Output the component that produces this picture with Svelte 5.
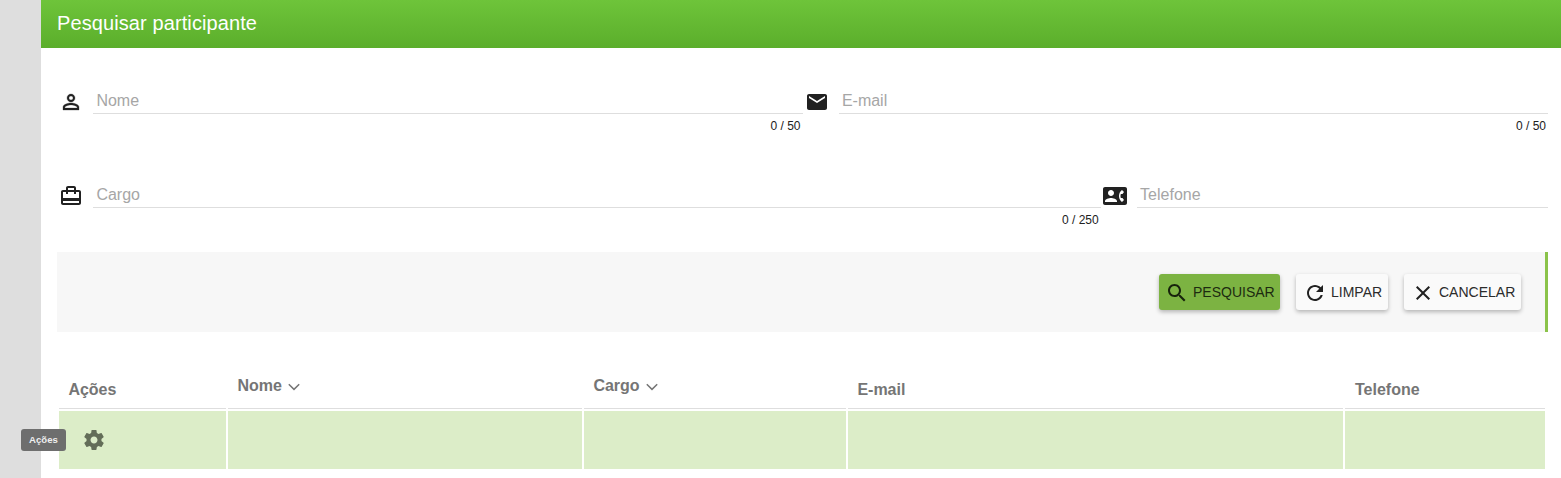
<script>
  const icons = {
    person: 'M12 5.9a2.1 2.1 0 1 1 0 4.2 2.1 2.1 0 0 1 0-4.2m0 9c2.97 0 6.1 1.46 6.1 2.1v1.1H5.9V17c0-.64 3.13-2.1 6.1-2.1M12 4C9.79 4 8 5.79 8 8s1.79 4 4 4 4-1.79 4-4-1.79-4-4-4zm0 9c-2.67 0-8 1.34-8 4v3h16v-3c0-2.66-5.33-4-8-4z',
    mail: 'M20 4H4c-1.1 0-1.99.9-1.99 2L2 18c0 1.1.9 2 2 2h16c1.1 0 2-.9 2-2V6c0-1.1-.9-2-2-2zm0 4l-8 5-8-5V6l8 5 8-5v2z',
    bag: 'M20 6h-3V4c0-1.11-.89-2-2-2H9c-1.11 0-2 .89-2 2v2H4c-1.11 0-2 .89-2 2v11c0 1.11.89 2 2 2h16c1.11 0 2-.89 2-2V8c0-1.11-.89-2-2-2zM9 4h6v2H9V4zm11 15H4v-2h16v2zm0-5H4V8h3v2h2V8h6v2h2V8h3v6z',
    phone: 'M22 3H2C.9 3 0 3.9 0 5v14c0 1.1.9 2 2 2h20c1.1 0 1.99-.9 1.99-2L24 5c0-1.1-.9-2-2-2zM8 6c1.66 0 3 1.34 3 3s-1.34 3-3 3-3-1.34-3-3 1.34-3 3-3zm6 12H2v-1c0-2 4-3.1 6-3.1s6 1.1 6 3.1v1zm3.85-4h1.64L21 16l-1.99 1.99c-1.31-.98-2.28-2.38-2.73-3.99-.18-.64-.28-1.31-.28-2s.1-1.36.28-2c.45-1.62 1.42-3.01 2.73-3.99L21 8l-1.51 2h-1.64c-.22.63-.35 1.3-.35 2s.13 1.37.35 2z',
    search: 'M15.5 14h-.79l-.28-.27C15.41 12.59 16 11.11 16 9.5 16 5.91 13.09 3 9.5 3S3 5.91 3 9.5 5.91 16 9.5 16c1.61 0 3.09-.59 4.23-1.57l.27.28v.79l5 4.99L20.49 19l-4.99-5zm-6 0C7.01 14 5 11.99 5 9.5S7.01 5 9.5 5 14 7.01 14 9.5 11.99 14 9.5 14z',
    refresh: 'M17.65 6.35C16.2 4.9 14.21 4 12 4c-4.42 0-7.99 3.58-7.99 8s3.57 8 7.99 8c3.73 0 6.84-2.55 7.73-6h-2.08c-.82 2.33-3.04 4-5.65 4-3.31 0-6-2.69-6-6s2.69-6 6-6c1.66 0 3.14.69 4.22 1.78L13 11h7V4l-2.35 2.35z',
    close: 'M19 6.41L17.59 5 12 10.59 6.41 5 5 6.41 10.59 12 5 17.59 6.41 19 12 13.41 17.59 19 19 17.59 13.41 12z',
    gear: 'M19.43 12.98c.04-.32.07-.64.07-.98s-.03-.66-.07-.98l2.11-1.65c.19-.15.24-.42.12-.64l-2-3.46c-.12-.22-.39-.3-.61-.22l-2.49 1c-.52-.4-1.08-.73-1.69-.98l-.38-2.65C14.46 2.18 14.25 2 14 2h-4c-.25 0-.46.18-.49.42l-.38 2.65c-.61.25-1.17.59-1.69.98l-2.49-1c-.23-.09-.49 0-.61.22l-2 3.46c-.13.22-.07.49.12.64l2.11 1.65c-.04.32-.07.65-.07.98s.03.66.07.98l-2.11 1.65c-.19.15-.24.42-.12.64l2 3.46c.12.22.39.3.61.22l2.49-1c.52.4 1.08.73 1.69.98l.38 2.65c.03.24.24.42.49.42h4c.25 0 .46-.18.49-.42l.38-2.65c.61-.25 1.17-.59 1.69-.98l2.49 1c.23.09.49 0 .61-.22l2-3.46c.12-.22.07-.49-.12-.64l-2.11-1.65zM12 15.5c-1.93 0-3.5-1.57-3.5-3.5s1.57-3.5 3.5-3.5 3.5 1.57 3.5 3.5-1.57 3.5-3.5 3.5z'
  };
  const rows = [
    { kind: 'even', fields: [
      { label: 'Nome', icon: 'person', count: '0 / 50' },
      { label: 'E-mail', icon: 'mail', count: '0 / 50' }
    ] },
    { kind: 'wide', fields: [
      { label: 'Cargo', icon: 'bag', count: '0 / 250' },
      { label: 'Telefone', icon: 'phone', count: '' }
    ] }
  ];
  const buttons = [
    { label: 'PESQUISAR', icon: 'search', kind: 'primary' },
    { label: 'LIMPAR', icon: 'refresh', kind: 'clear' },
    { label: 'CANCELAR', icon: 'close', kind: 'cancel' }
  ];
  const columns = [
    { label: 'Ações' },
    { label: 'Nome', sort: true },
    { label: 'Cargo', sort: true },
    { label: 'E-mail' },
    { label: 'Telefone' }
  ];
</script>

{#snippet icon(name)}
  <svg class="icon {name}" viewBox="0 0 24 24"><path d={icons[name]} /></svg>
{/snippet}

<div class="page">
  <main>
    <header><h1>Pesquisar participante</h1></header>
    <form>
      {#each rows as row}
        <div class="row {row.kind}">
          {#each row.fields as f}
            <div class="field">
              <span class="lead">{@render icon(f.icon)}</span>
              <div class="control">
                <div class="line">{f.label}</div>
                <div class="count">{f.count}</div>
              </div>
            </div>
          {/each}
        </div>
      {/each}
    </form>
    <div class="actions">
      {#each buttons as b}
        <button class={b.kind} type="button">{@render icon(b.icon)}<span>{b.label}</span></button>
      {/each}
    </div>
    <div class="table">
      {#each columns as c}
        <div class="th" class:sort={c.sort}>
          <span>{c.label}</span>
          {#if c.sort}
            <svg class="chevron" viewBox="0 0 12 8"><path d="M.8 1.2 6 6.4 11.2 1.2" /></svg>
          {/if}
        </div>
      {/each}
      {#each columns as c, i}
        <div class="td">
          {#if i === 0}
            <span class="gearbox">{@render icon('gear')}<span class="tip">Ações</span></span>
          {/if}
        </div>
      {/each}
    </div>
  </main>
</div>

<style>
  :global(body) { margin: 0; overflow: hidden; }
  .page {
    box-sizing: border-box;
    height: 478px;
    padding-left: 41px;
    background: #dedede;
    font-family: "Liberation Sans", Arial, sans-serif;
    color: #212121;
  }
  main { height: 478px; background: #fff; }
  header {
    height: 48px;
    padding-left: 16px;
    display: flex;
    align-items: center;
    background: linear-gradient(#6ec43a, #5bae2b);
  }
  h1 { margin: 0; font-size: 20px; font-weight: 400; line-height: 24px; letter-spacing: .1px; color: #fff; padding-bottom: 2px; }
  form { padding: 36px 13px 0 16px; }
  .row { display: grid; height: 94px; }
  .even { grid-template-columns: 1fr 1fr; }
  .wide { grid-template-columns: 70% 30%; height: 74px; }
  .field { display: flex; }
  .lead { width: 36px; padding: 6px 0 0 2px; box-sizing: border-box; }
  .icon { display: block; width: 24px; height: 24px; fill: #212121; flex: none; }
  .person { stroke: #212121; stroke-width: .3; }
  .control { flex: 1; }
  .line {
    height: 29px;
    padding-left: 3.4px;
    border-bottom: 1px solid #dedede;
    font-size: 16px;
    line-height: 33px;
    color: #a6a6a6;
  }
  .count { font-size: 12px; line-height: 14px; padding: 5px 2px 0 0; text-align: right; }
  .actions {
    box-sizing: border-box;
    height: 80px;
    margin: 0 13px 0 16px;
    padding-right: 24px;
    border-right: 3px solid #8bc34a;
    background: #f7f7f7;
    display: flex;
    align-items: center;
    justify-content: flex-end;
    gap: 16px;
  }
  button {
    display: flex;
    align-items: center;
    gap: 4px;
    height: 36px;
    margin: 0;
    padding: 0 6px;
    border: 0;
    border-radius: 3px;
    background: #fafafa;
    box-shadow: 0 2px 4px rgba(0, 0, 0, .27);
    font: 14px/36px "Liberation Sans", Arial, sans-serif;
    color: #2b2b2b;
    white-space: nowrap;
    box-sizing: border-box;
  }
  button .icon { margin-top: 1px; }
  .primary { width: 121px; background: #7cb342; color: #1d2b10; }
  .primary .icon { fill: #17230c; }
  .clear { width: 92px; padding-left: 7px; }
  .cancel { width: 117px; padding-left: 7px; }
  .table {
    display: grid;
    grid-template-columns: 167px 354px 262px 495px 200px;
    grid-template-rows: 38px 58px;
    gap: 2px;
    margin: 39px 16px 0 18px;
  }
  .th {
    box-sizing: border-box;
    padding: 9px 9px 0 9.4px;
    border-bottom: 1px solid #dedede;
    font-size: 16px;
    font-weight: 700;
    line-height: 20px;
    color: #757575;
  }
  .th:nth-child(5) { padding-left: 10px; }
  .sort { padding-top: 5px; display: flex; gap: 6px; }
  .chevron { width: 12px; height: 8px; margin-top: 7px; fill: none; stroke: #757575; stroke-width: 1.5; }
  .td { background: #dcedc8; padding: 17px 0 0 23px; }
  .gearbox { display: block; position: relative; width: 24px; height: 24px; }
  .gear { fill: #636d58; }
  .tip {
    position: absolute;
    left: -61px;
    top: 1px;
    width: 45px;
    height: 22px;
    border-radius: 3px;
    background: #6e6e6e;
    color: #f0f0f0;
    font-size: 9.6px;
    font-weight: 700;
    line-height: 21px;
    text-align: center;
  }
</style>
